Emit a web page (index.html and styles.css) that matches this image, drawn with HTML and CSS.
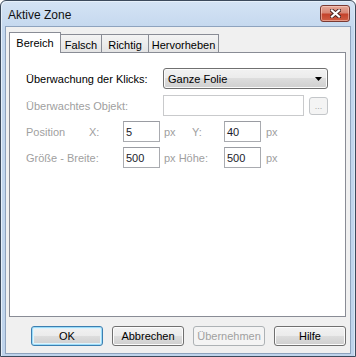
FILE: index.html
```html
<!DOCTYPE html>
<html lang="de">
  <head>
    <meta charset="UTF-8" />
    <title>Aktive Zone</title>
    <link rel="stylesheet" href="styles.css">
  </head>
  <body>
    <!-- Fenster -->
    <div class="window">
      <div class="titlebar">
        <span class="title">Aktive Zone</span>
        <span class="close">
          <svg width="11" height="9" viewBox="0 0 11 9">
            <path d="M2 1.5 L9 7.5 M9 1.5 L2 7.5" stroke="#4a2320" stroke-width="4" stroke-linecap="square"/>
            <path d="M2 1.5 L9 7.5 M9 1.5 L2 7.5" stroke="#fff" stroke-width="2.2" stroke-linecap="square"/>
          </svg>
        </span>
      </div>

      <div class="client">
        <!-- Reiter -->
        <div class="tabs">
          <div class="tab active tab-bereich">Bereich</div>
          <div class="tab tab-falsch">Falsch</div>
          <div class="tab tab-richtig">Richtig</div>
          <div class="tab tab-hervorheben">Hervorheben</div>
        </div>

        <div class="panel">
          <div class="row row-first">
            <span class="label">Überwachung der Klicks:</span>
            <div class="select">
              <span>Ganze Folie</span>
              <svg class="arrow" width="7" height="4" viewBox="0 0 7 4"><polygon points="0,0 7,0 3.5,4" fill="#000"/></svg>
            </div>
          </div>

          <div class="row">
            <span class="label disabled">Überwachtes Objekt:</span>
            <div class="field field-wide field-off"></div>
            <div class="browse">...</div>
          </div>

          <!-- Position und Größe -->
          <div class="coords">
            <span class="disabled">Position</span>
            <span class="disabled">X:</span>
            <div class="field">5</div>
            <span class="disabled unit">px</span>
            <span class="disabled unit">Y:</span>
            <div class="field">40</div>
            <span class="disabled unit-last">px</span>

            <span class="disabled span2">Größe - Breite:</span>
            <div class="field">500</div>
            <span class="disabled unit span2">px Höhe:</span>
            <div class="field">500</div>
            <span class="disabled unit-last">px</span>
          </div>
        </div>

        <div class="buttons">
          <div class="btn btn-default">OK</div>
          <div class="btn">Abbrechen</div>
          <div class="btn btn-off">Übernehmen</div>
          <div class="btn">Hilfe</div>
        </div>
      </div>
    </div>
  </body>
</html>
```

FILE: styles.css
```css
* {
  margin: 0;
  padding: 0;
  box-sizing: border-box;
}
body {
  font-family: "Liberation Sans", Arial, sans-serif;
  font-size: 11px;
  color: #000;
  background: #fff;
}

/* Fenster */
.window {
  width: 356px;
  height: 357px;
  border: 1px solid #3c4a5c;
  border-radius: 6px 6px 0 0;
  background: linear-gradient(#d4e3f4, #c3d7ee 30px, #bfd4ec);
  padding: 0 4px 2px 4px;
  display: flex;
  flex-direction: column;
  box-shadow: inset 1px 1px 0 #e6f0fa, inset -1px 0 0 #dbe8f6;
}
.titlebar {
  height: 25px;
  display: flex;
  align-items: center;
  justify-content: space-between;
  padding-left: 3px;
  padding-right: 1px;
}
.title {
  font-size: 12px;
  color: #111;
  padding-top: 2px;
}
.close {
  width: 30px;
  height: 17px;
  border: 1px solid #7a3a33;
  border-radius: 3px;
  background: linear-gradient(#e6a898, #d78776 45%, #c4432c 55%, #cf5f45);
  box-shadow: inset 0 0 0 1px rgba(255, 220, 210, 0.5);
  display: flex;
  align-items: center;
  justify-content: center;
}
.close svg {
  display: block;
}

.client {
  flex: 1;
  border: 1px solid #8ea3be;
  background: #f0f0f0;
  padding: 5px 4px 0 3px;
  display: flex;
  flex-direction: column;
}

/* Reiter */
.tabs {
  display: flex;
  align-items: flex-end;
  height: 21px;
  margin-bottom: -1px;
  position: relative;
  z-index: 1;
}
.tab {
  height: 18px;
  margin-bottom: 1px;
  margin-left: -1px;
  border: 1px solid #898c95;
  border-bottom: none;
  background: linear-gradient(#f4f4f4, #e4e4e4);
  display: flex;
  align-items: center;
  justify-content: center;
  padding-top: 2px;
}
.tab.active {
  height: 21px;
  margin-bottom: 0;
  margin-left: 0;
  background: #fff;
  padding-top: 0;
  position: relative;
  z-index: 2;
}
.tab-bereich { width: 52px; }
.tab-falsch { width: 42px; }
.tab-richtig { width: 48px; }
.tab-hervorheben { width: 71px; }

.panel {
  height: 265px;
  border: 1px solid #898c95;
  background: #fff;
  padding: 15px 0 0 16px;
}
.row {
  display: flex;
  align-items: center;
  height: 21px;
  margin-top: 6px;
}
.row-first {
  margin-top: 0;
}
.label {
  width: 137px;
}
.disabled {
  color: #a0a0a0;
}

.select {
  width: 165px;
  height: 21px;
  border: 1px solid #707070;
  border-radius: 3px;
  background: linear-gradient(#f2f2f2, #ebebeb 50%, #dddddd 50%, #cfcfcf);
  box-shadow: inset 0 0 0 1px #fbfbfb;
  display: flex;
  align-items: center;
  justify-content: space-between;
  padding: 0 4px 0 4px;
}
.select .arrow {
  display: block;
  margin-right: 1px;
}

.field {
  width: 37px;
  height: 21px;
  border: 1px solid #a9abb0;
  border-top-color: #9a9ca2;
  background: #fff;
  color: #1a1a2a;
  padding: 0 0 0 2px;
  display: flex;
  align-items: center;
}
.field-wide {
  width: 141px;
}
.field-off {
  border-color: #c9cacc;
}
.browse {
  width: 19px;
  height: 18px;
  margin-left: 5px;
  border: 1px solid #c3c6c9;
  border-radius: 3px;
  background: #f4f4f4;
  color: #a8a8a8;
  font-size: 9px;
  display: flex;
  align-items: flex-end;
  justify-content: center;
  padding-bottom: 3px;
}

.coords {
  display: grid;
  grid-template-columns: 63px 34px 37px 28px 36px 37px auto;
  grid-auto-rows: 21px;
  row-gap: 5px;
  align-items: center;
  margin-top: 5px;
}
.unit {
  padding-left: 4px;
}
.unit-last {
  padding-left: 5px;
}
.span2 {
  grid-column: span 2;
}

/* Schaltflächen */
.buttons {
  display: flex;
  justify-content: flex-end;
  gap: 9px;
  margin-top: 9px;
}
.btn {
  width: 72px;
  height: 20px;
  border: 1px solid #707070;
  border-radius: 3px;
  background: linear-gradient(#f2f2f2, #ebebeb 50%, #dddddd 50%, #cfcfcf);
  box-shadow: inset 0 0 0 1px #fcfcfc;
  display: flex;
  align-items: center;
  justify-content: center;
}
.btn-default {
  border-color: #3c7fb1;
  box-shadow: inset 0 0 0 1px #9cdcf8, inset 0 0 0 2px #dff3fc;
}
.btn-off {
  border-color: #adb2b5;
  background: #f4f4f4;
  box-shadow: none;
  color: #a0a0a0;
}
```
